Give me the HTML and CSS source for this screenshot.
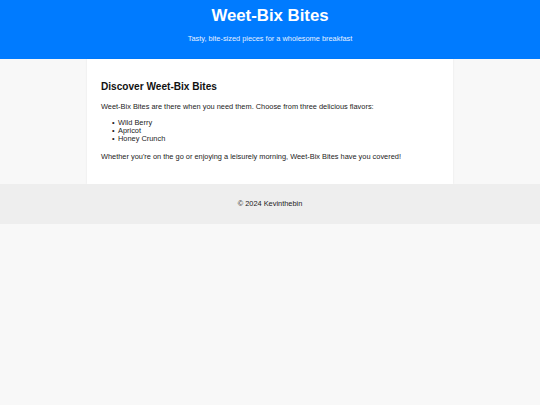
FILE: index.html
```html
<!DOCTYPE html>
<html lang="en">
<head>
<meta charset="utf-8">
<title>Weet-Bix Bites</title>
<link rel="stylesheet" href="styles.css">
</head>
<body>
<header class="site-header">
  <h1 class="site-title">Weet-Bix Bites</h1>
  <p class="site-tagline">Tasty, bite-sized pieces for a wholesome breakfast</p>
</header>
<main class="card">
  <h2 class="card-title">Discover Weet-Bix Bites</h2>
  <p class="card-text">Weet-Bix Bites are there when you need them. Choose from three delicious flavors:</p>
  <ul class="flavors">
    <li>Wild Berry</li>
    <li>Apricot</li>
    <li>Honey Crunch</li>
  </ul>
  <p class="card-text card-last">Whether you're on the go or enjoying a leisurely morning, Weet-Bix Bites have you covered!</p>
</main>
<footer class="site-footer">
  <p class="copyright">&copy; 2024 Kevinthebin</p>
</footer>
</body>
</html>
```

FILE: styles.css
```css
html, body {
  margin: 0;
  padding: 0;
}
body {
  background: #f8f8f8;
  font-family: "Liberation Sans", Arial, sans-serif;
  font-size: 7.4px;
  line-height: 8px;
  color: #222;
}
.site-header {
  background: #007bff;
  color: #fff;
  text-align: center;
  height: 59px;
  padding-top: 6px;
  box-sizing: border-box;
}
.site-title {
  margin: 0;
  font-size: 16.8px;
  line-height: 20px;
  font-weight: bold;
}
.site-tagline {
  margin: 9px 0 0;
  font-size: 7.4px;
  line-height: 8px;
  color: #e6f0ff;
}
.card {
  display: block;
  width: 366px;
  margin: 0 auto;
  background: #fff;
  box-sizing: border-box;
  padding: 14px 14px 14px;
  box-shadow: 0 0 2px rgba(0, 0, 0, 0.08);
}
.card-title {
  margin: 8px 0 10px;
  font-size: 10.1px;
  line-height: 12px;
  font-weight: bold;
  color: #111;
}
.card-text {
  margin: 0;
}
.flavors {
  margin: 8px 0 9.5px;
  padding-left: 11px;
  list-style: none;
}
.flavors li::before {
  content: "\2022";
  display: inline-block;
  width: 6px;
}
.card-last {
  margin-bottom: 9.5px;
}
.site-footer {
  background: #eeeeee;
  text-align: center;
  height: 40px;
  padding-top: 16px;
  box-sizing: border-box;
}
.copyright {
  margin: 0;
}
```
